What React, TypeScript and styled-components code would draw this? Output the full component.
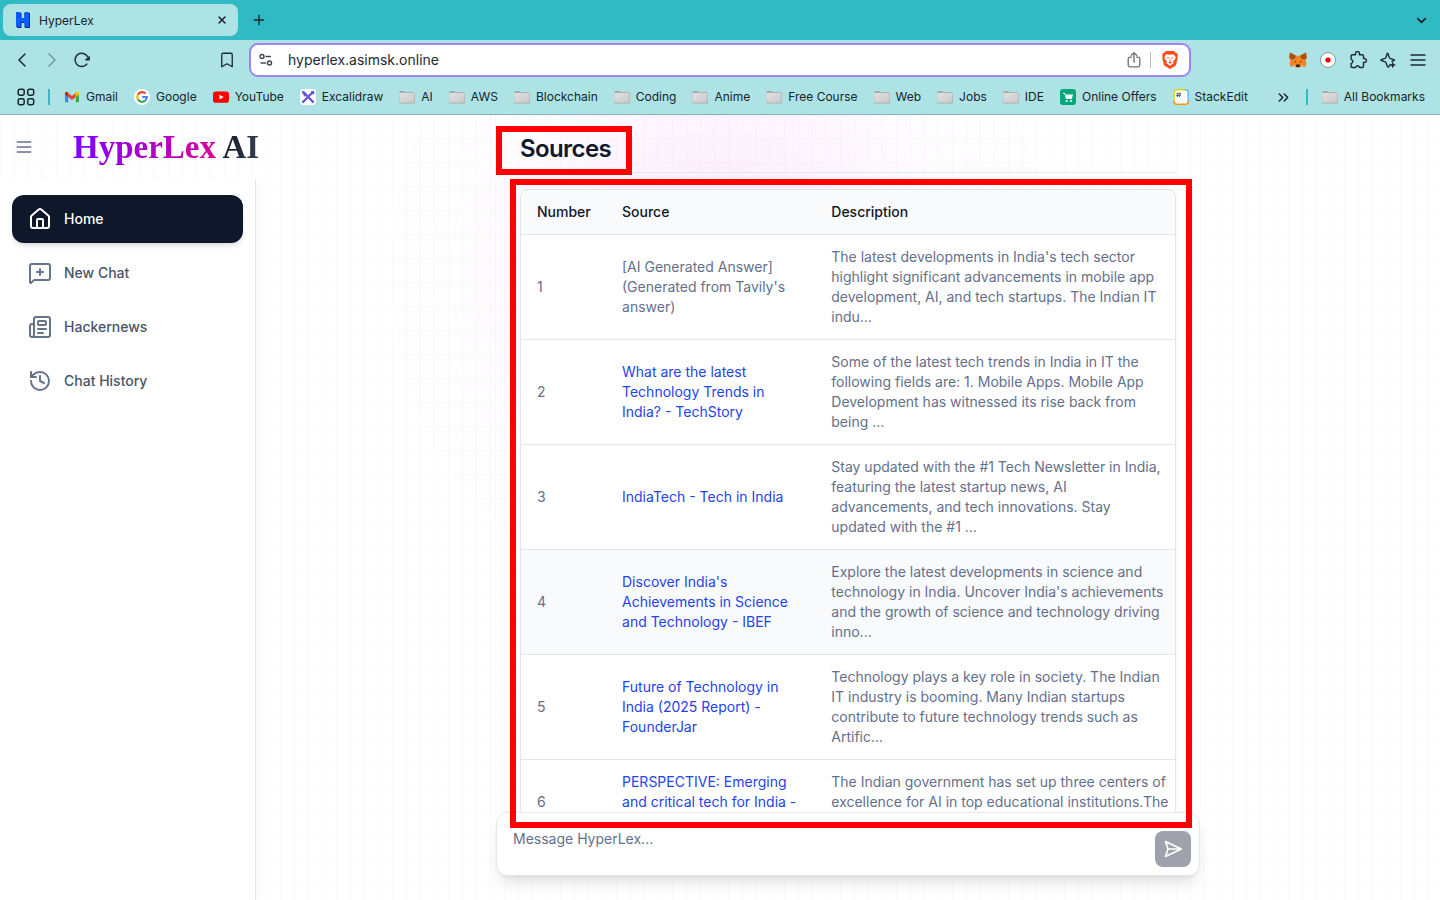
import React from 'react';
import styled, { createGlobalStyle, css } from 'styled-components';
import {
  Home, MessageSquarePlus, Newspaper, History, ChevronDown, ChevronLeft,
  ChevronRight, Bookmark, Plus, X, ChevronsRight,
} from 'lucide-react';

const GlobalStyle = createGlobalStyle`
  *, *::before, *::after { box-sizing: border-box; }
  body { margin: 0; font-family: Inter, "Liberation Sans", sans-serif; color: #0f172a; background: #fff; }
  button, textarea, input { font: inherit; color: inherit; }
  button { border: 0; padding: 0; background: none; cursor: pointer; display: inline-flex; align-items: center; justify-content: center; }
  a { color: inherit; text-decoration: none; }
  svg { display: block; flex: none; }
`;

const Browser = styled.div`
  display: flex;
  flex-direction: column;
  height: 100vh;
  overflow: hidden;
`;

/* ---------- browser frame ---------- */

const TabStrip = styled.header`
  display: flex;
  align-items: center;
  height: 40px;
  flex: none;
  padding: 0 11px 0 3px;
  background: #30bac3;
  color: #17242b;
`;

const Tab = styled.div`
  display: flex;
  align-items: center;
  gap: 8px;
  width: 235px;
  height: 32px;
  padding: 0 10px 0 12px;
  border-radius: 8px;
  background: #ade3e4;
  font-size: 12px;
`;

const TabTitle = styled.span`
  flex: 1;
`;

const NewTab = styled.button`
  width: 24px;
  height: 24px;
  margin-left: 9px;
`;

const TabSearch = styled.button`
  margin-left: auto;
`;

const Toolbar = styled.nav`
  display: flex;
  align-items: center;
  flex: none;
  height: 40px;
  padding: 0 12px;
  background: #ade3e4;
  color: #1d2b31;
`;

const ToolGroup = styled.div`
  display: flex;
  align-items: center;
  gap: 10px;
`;

const ToolButton = styled.button<{ $dim?: boolean }>`
  width: 20px;
  height: 24px;
  opacity: ${(p) => (p.$dim ? 0.4 : 1)};
`;

const LeftTools = styled.div`
  display: flex;
  justify-content: space-between;
  width: 225px;
  flex: none;
`;

const AddressBar = styled.div`
  display: flex;
  align-items: center;
  flex: 1;
  min-width: 0;
  height: 34px;
  margin: 0 97px 0 12px;
  padding: 0 9px 0 8px;
  border: 2px solid #9a86f3;
  border-radius: 9px;
  background: #fff;
`;

const AddressInput = styled.input`
  flex: 1;
  min-width: 0;
  margin-left: 15px;
  padding: 0;
  border: 0;
  outline: 0;
  background: none;
  font-size: 14px;
  line-height: 20px;
`;

const AddressRule = styled.span`
  width: 1px;
  height: 16px;
  margin: 0 9px 0 6px;
  background: #b5b9bc;
`;

const Bookmarks = styled.nav`
  display: flex;
  align-items: center;
  flex: none;
  height: 35px;
  padding: 0 15px 0 16px;
  border-bottom: 1px solid #86b4ba;
  background: #ade3e4;
  color: #17242b;
  font-size: 12px;
  line-height: 16px;
  white-space: nowrap;
`;

const BookmarkRule = styled.span`
  width: 2px;
  height: 16px;
  background: #30bac3;
`;

const BookmarkStart = styled.div`
  display: flex;
  align-items: center;
  gap: 12px;
`;

const BookmarkList = styled.div`
  display: flex;
  align-items: center;
  gap: 16px;
  margin-left: 14px;
`;

const BookmarkLink = styled.a`
  display: flex;
  align-items: center;
  gap: 6px;
`;

const BookmarkEnd = styled.div`
  display: flex;
  align-items: center;
  gap: 14px;
  margin-left: auto;
`;

/* ---------- site ---------- */

const Site = styled.div`
  position: relative;
  display: flex;
  flex: 1;
  min-height: 0;
  isolation: isolate;
  overflow: hidden;
  background-color: #fff;
  background-image: linear-gradient(to right, #8080800a 1px, transparent 1px),
    linear-gradient(to bottom, #8080800a 1px, transparent 1px);
  background-size: 14px 24px;
`;

const Glow = styled.div`
  position: absolute;
  z-index: -1;
  top: 0;
  left: 0;
  right: 0;
  width: 310px;
  height: 310px;
  margin: auto;
  border-radius: 50%;
  background: #e879f9;
  opacity: 0.2;
  filter: blur(100px);
`;

const Side = styled.div`
  display: flex;
  flex-direction: column;
  flex: none;
  width: 256px;
`;

const SiteHeader = styled.header`
  display: flex;
  align-items: center;
  flex: none;
  gap: 39px;
  height: 64px;
  padding-left: 14px;
  color: #64748b;
  white-space: nowrap;
`;

const Logo = styled.a`
  font-family: "Liberation Serif", serif;
  font-size: 33px;
  font-weight: 700;
  line-height: 40px;
`;

const LogoPart = styled.span<{ $from: string; $to: string }>`
  color: transparent;
  background: linear-gradient(to right, ${(p) => p.$from}, ${(p) => p.$to});
  background-clip: text;
  -webkit-background-clip: text;
`;

const SideNav = styled.nav`
  display: flex;
  flex-direction: column;
  gap: 6px;
  flex: 1;
  padding: 16px 12px;
  border-right: 1px solid #e2e4e8;
  background: #fff;
  box-shadow: 0 4px 12px #0000000a;
`;

const SideLink = styled.a<{ $active?: boolean }>`
  display: flex;
  align-items: center;
  gap: 12px;
  height: 48px;
  padding: 0 16px;
  border-radius: 12px;
  color: #475569;
  font-size: 14px;
  font-weight: 500;
  line-height: 20px;
  svg { color: #64748b; }
  ${(p) => p.$active && css`
    background: #0f172a;
    color: #fff;
    box-shadow: 0 4px 6px -1px #0000001a, 0 2px 4px -2px #0000001a;
    svg { color: #fff; }
  `}
`;

const Main = styled.main`
  display: flex;
  flex: 1;
  min-width: 0;
  justify-content: center;
`;

const Chat = styled.div`
  position: relative;
  display: flex;
  flex-direction: column;
  width: 100%;
  max-width: 706px;
  padding-bottom: 24px;
`;

const Answer = styled.section`
  flex: 1;
  min-height: 0;
  overflow: hidden;
  margin-bottom: -1px;
  padding: 18px 24px 0;
  border: solid #8080800c;
  border-width: 0 1px;
`;

const SectionTitle = styled.h2`
  margin: 0 0 16px;
  padding-bottom: 7px;
  border-bottom: 1px solid #e2e8f0;
  font-size: 24px;
  font-weight: 600;
  line-height: 32px;
  letter-spacing: -0.025em;
`;

const TableCard = styled.div`
  overflow: hidden;
  border: 1px solid #e2e4ea;
  border-radius: 8px;
  background: #fff;
`;

const Table = styled.table`
  width: 100%;
  border-collapse: collapse;
  table-layout: fixed;
  font-size: 14px;
  line-height: 20px;
  text-align: left;
`;

const NumberCol = styled.col`
  width: 13%;
`;

const SourceCol = styled.col`
  width: 32%;
`;

const HeadRow = styled.tr`
  background: #f9fafb;
`;

const HeadCell = styled.th`
  padding: 12px 16px;
  font-weight: 500;
`;

const Row = styled.tr<{ $hover?: boolean }>`
  border-top: 1px solid #e2e4ea;
  background: ${(p) => (p.$hover ? '#f9fafb' : 'transparent')};
`;

const Cell = styled.td`
  padding: 12px 0 12px 16px;
  color: #64708b;
  vertical-align: middle;
  white-space: pre-line;
`;

const SourceLink = styled.a`
  color: #2543eb;
`;

const Composer = styled.form`
  position: relative;
  display: flex;
  align-items: flex-start;
  flex: none;
  height: 64px;
  margin: 0 1px;
  padding: 16px 8px 8px 16px;
  border: 1px solid #e5e7eb;
  border-radius: 12px;
  background: #fff;
  box-shadow: 0 10px 15px -3px #0000001a, 0 4px 6px -4px #0000001a;
`;

const MessageBox = styled.textarea`
  flex: 1;
  height: 40px;
  padding: 0;
  border: 0;
  outline: 0;
  resize: none;
  background: none;
  font-size: 14px;
  line-height: 20px;
  &::placeholder { color: #64708b; opacity: 1; }
`;

const SendButton = styled.button`
  width: 36px;
  height: 36px;
  margin-top: 2px;
  border-radius: 8px;
  background: #9fa2ab;
  color: #fff;
`;

const Marker = styled.div`
  position: absolute;
  border: 6px solid #f00;
  pointer-events: none;
`;

const TitleMarker = styled(Marker)`
  top: 11px;
  left: 1px;
  width: 136px;
  height: 49px;
`;

const TableMarker = styled(Marker)`
  top: 64px;
  right: 9px;
  bottom: 72px;
  left: 15px;
`;

/* ---------- drawings ---------- */

const HLogo = () => (
  <svg width="16" height="16" viewBox="0 0 16 16">
    <path d="M2 1h4.500v5h3V1H15v15H9.800v-5H6.500v5H2z" fill="#0b2a7a" />
    <path d="M1 0h4.600v6h3.800V0H14v15H9.400v-5H5.600v5H1z" fill="#0a5cff" />
  </svg>
);
const Reload = () => (
  <svg width="18" height="18" viewBox="0 0 18 18" fill="none" stroke="currentColor" strokeWidth="1.500">
    <path d="M14.300 12.700A6.700 6.700 0 1 1 14.800 6" />
    <path d="M16.800 4.500v5h-4.500q-.5-.8.500-1.500z" fill="currentColor" stroke="none" />
  </svg>
);
const Tune = () => (
  <svg width="14" height="14" viewBox="0 0 14 14" fill="none" stroke="#3c464b" strokeWidth="1.400">
    <circle cx="3" cy="3.500" r="2" /><path d="M6.500 3.500H12" />
    <circle cx="10.500" cy="10" r="2" /><path d="M1.500 10H7" />
  </svg>
);
const ShareIcon = () => (
  <svg width="14" height="18" viewBox="0 0 14 18" fill="none" stroke="#6b7074" strokeWidth="1.300" strokeLinecap="round" strokeLinejoin="round">
    <path d="M4.500 6.200H3q-1.800 0-1.800 1.800v6q0 1.800 1.800 1.800h8q1.800 0 1.800-1.800V8q0-1.800-1.800-1.800H9.500M7 11.300V1.800M4.300 4.300 7 1.600l2.700 2.700" />
  </svg>
);
const Brave = () => (
  <svg width="16" height="18" viewBox="0 0 16 18">
    <path d="M4 0h8l1.600 1.700 1.300.1 1 2.600-.5 1.300.4 1.600-2 7.200L8 18l-5.800-3.500-2-7.200.4-1.600-.5-1.300 1-2.600 1.300-.1z" fill="#fb4a1c" />
    <path d="M4.300 3.200 8 3.800l3.700-.6 1.900 2.700-.5 2.300-2.200 2.400.8 1.400L8 14.800 4.300 12l.8-1.400-2.200-2.400-.5-2.300z" fill="#fff" />
    <path d="m4.400 6.100 2.500.6-.4 1.200zM11.600 6.100l-2.500.6.400 1.200zM8 7.200l.6 2.600L8 10.500l-.6-.7zM6 11.200l2-.6 2 .6-2 1.500z" fill="#fb4a1c" />
  </svg>
);
const Fox = () => (
  <svg width="18" height="16" viewBox="0 0 18 16">
    <path d="m1 .5 6 3.200h4l6-3.200.7 5-1.200 3 1 3-1.300 3.600-3.500-.8L11 15.500H7l-1.700-1.200-3.500.8L.5 11.500l1-3L.3 5.500z" fill="#f5841f" />
    <path d="m1 .5 6 3.300L5.500 7 1.500 7.500.3 5.500zM17 .5l-6 3.300L12.500 7l4 .5 1.200-2z" fill="#a8510e" />
    <path d="m7 12.800 2-.6 2 .6v2.200H7z" fill="#3a2a20" />
    <path d="m4.800 9 2.400.4-.2 1zM13.200 9l-2.400.4.2 1z" fill="#24333b" />
    <path d="m2.500 14.600 2.500-.8 1.500 1.200-1.300-2.400zM15.500 14.600l-2.500-.8-1.500 1.200 1.300-2.400z" fill="#d9c3b2" opacity=".8" />
  </svg>
);
const RecordDot = () => (
  <svg width="16" height="16" viewBox="0 0 16 16">
    <circle cx="8" cy="8" r="7.500" fill="#fff" stroke="#7d9a9f" /><circle cx="8" cy="8" r="2.600" fill="#f00" />
  </svg>
);
const PuzzlePiece = () => (
  <svg width="18" height="18" viewBox="0 0 18 18" fill="none" stroke="currentColor" strokeWidth="1.400" strokeLinejoin="round">
    <path d="M3.300 3.700h2.900c.3 0 .5-.3.400-.6a2 2 0 1 1 3.800 0c-.1.300.1.600.4.600h2.500q1.200 0 1.200 1.200v2.300c0 .3.300.5.600.4a1.900 1.900 0 1 1 0 3.700c-.3-.1-.6.100-.6.400v3.600q0 1.200-1.200 1.200h-2.400c-.3 0-.5-.200-.6-.5a1.800 1.800 0 0 0-3.400 0c-.1.300-.3.500-.6.500h-3q-1.200 0-1.200-1.200v-2.600c0-.3.200-.5.500-.6a1.800 1.800 0 0 0 0-3.400c-.3-.1-.5-.3-.5-.6V4.900q0-1.200 1.200-1.200z" />
  </svg>
);
const Spark = () => (
  <svg width="17" height="17" viewBox="0 0 17 17" fill="none" stroke="currentColor" strokeWidth="1.400" strokeLinejoin="round">
    <path d="M10.500 12.200 8.700 14.800Q8 15.500 7.500 14.500L6 10.800q-.3-.7-1-1L1.300 8.500q-.8-.4 0-.8L5 6.300q.7-.3 1-1l1.200-3.800q.3-.8.700 0L9.200 5.300q.3.700 1 1L14 7.700q.8.400 0 .8l-2.500 1" />
    <path d="m12.700 9.800 1 2.200 2.300 1-2.300 1-1 2.200-1-2.200-2.200-1 2.200-1z" fill="currentColor" stroke="none" />
  </svg>
);
const Burger = () => (
  <svg width="16" height="14" viewBox="0 0 16 14" stroke="currentColor" strokeWidth="1.400"><path d="M.5 2h15M.5 7h15M.5 12h15" /></svg>
);
const AppGrid = () => (
  <svg width="18" height="18" viewBox="0 0 18 18" fill="none" stroke="currentColor" strokeWidth="1.500">
    <rect x="1.200" y="1.200" width="6" height="6" rx="1.700" /><rect x="10.700" y="1.200" width="6" height="6" rx="1.700" />
    <rect x="1.200" y="10.700" width="6" height="6" rx="1.700" /><rect x="10.700" y="10.700" width="6" height="6" rx="1.700" />
  </svg>
);
const Gmail = () => (
  <svg width="16" height="16" viewBox="0 0 16 16">
    <path d="M1 4v8.500q0 .8.800.8H4.200V6.500z" fill="#4285f4" /><path d="M15 4v8.500q0 .8-.8.800h-2.400V6.500z" fill="#34a853" />
    <path d="M4.200 4 8 7l3.800-3v4L8 11 4.200 8z" fill="#ea4335" />
    <path d="M1 4.300q0-1.500 1.500-1.500.8 0 1.700.9V8L1 5.600z" fill="#c5221f" /><path d="M15 4.300q0-1.500-1.500-1.500-.8 0-1.700.9V8L15 5.600z" fill="#fbbc04" />
  </svg>
);
const Google = () => (
  <svg width="16" height="16" viewBox="0 0 16 16" fill="none" strokeWidth="2.200">
    <circle cx="8" cy="8" r="8" fill="#fff" />
    <path d="M11.500 4.600A4.800 4.800 0 0 0 3.800 5.700" stroke="#ea4335" />
    <path d="M3.800 5.700a4.800 4.800 0 0 0 0 4.600" stroke="#fbbc05" />
    <path d="M3.800 10.300a4.800 4.800 0 0 0 7.400 1.300" stroke="#34a853" />
    <path d="M11.200 11.600A4.800 4.800 0 0 0 12.800 8H8.200" stroke="#4285f4" />
  </svg>
);
const YouTube = () => (
  <svg width="16" height="16" viewBox="0 0 16 16"><rect y="2.500" width="16" height="11.200" rx="2.800" fill="#f00" /><path d="m6.500 5.700 4.200 2.400-4.200 2.400z" fill="#fff" /></svg>
);
const Excalidraw = () => (
  <svg width="16" height="16" viewBox="0 0 16 16" fill="none" stroke="#6657d9" strokeLinecap="round">
    <rect width="16" height="16" rx="3" fill="#fff" stroke="none" />
    <path d="m4 3.500 9 9.500M3 13l4.500-4.500M9.500 6.500l2.800-2.800" strokeWidth="2.400" />
    <path d="M2.700 2.700 5 6.700M11.800 3h1.500v1.500" strokeWidth="1.800" />
  </svg>
);
const Folder = () => (
  <svg width="16" height="16" viewBox="0 0 16 16">
    <defs>
      <linearGradient id="folder-face" x1="0" y1="0" x2="1" y2="1">
        <stop offset="0" stopColor="#e2e2e2" /><stop offset="1" stopColor="#c8c8c8" />
      </linearGradient>
    </defs>
    <path d="M.3 4q0-2 1.500-2H5l1.300 1H14q1.500 0 1.500 1.500V6H.3z" fill="#9fa3a4" />
    <rect y="4" width="16" height="10.500" rx="1.500" fill="#a4a8a9" />
    <rect x=".3" y="3.700" width="15.200" height="10" rx="1.400" fill="url(#folder-face)" />
  </svg>
);
const Cart = () => (
  <svg width="16" height="16" viewBox="0 0 16 16">
    <rect width="16" height="16" rx="3" fill="#06a77d" />
    <path d="M3 4h2l.5 1.500H13L11.800 10H6L4.500 5H3z" fill="#fff" /><circle cx="6.700" cy="12" r="1.100" fill="#fff" /><circle cx="11" cy="12" r="1.100" fill="#fff" />
  </svg>
);
const StackEdit = () => (
  <svg width="16" height="16" viewBox="0 0 16 16" fill="none" strokeWidth="1.500">
    <rect x=".7" y=".7" width="14.600" height="14.600" rx="2.800" fill="#fff" />
    <path d="M1 13V3.500Q1 .8 3.500.8H13" stroke="#cddc1d" /><path d="M12.500.8q2.700 0 2.700 2.700V13" stroke="#6bb5ff" />
    <path d="M.9 12q0 3.200 2.600 3.200h9q2.700 0 2.700-2.700" stroke="#ff9500" />
    <path d="M5 3.500 4.400 8M7.200 3.500 6.600 8M3.400 4.800h4.600M3.100 6.600h4.600" stroke="#444" strokeWidth=".8" />
  </svg>
);
const SidebarToggle = () => (
  <svg width="20" height="20" viewBox="0 0 24 24" stroke="currentColor" strokeWidth="2" strokeLinecap="round"><path d="M4 6h16M4 12h16M4 18h16" /></svg>
);
const SendArrow = () => (
  <svg width="20" height="20" viewBox="0 0 24 24" fill="none" stroke="currentColor" strokeWidth="2" strokeLinecap="round" strokeLinejoin="round">
    <path d="m3 3 3 9-3 9 19-9ZM6 12h16" />
  </svg>
);

/* ---------- data ---------- */

const bookmarks: { label: string; Icon: React.FC }[] = [
  { label: 'Gmail', Icon: Gmail },
  { label: 'Google', Icon: Google },
  { label: 'YouTube', Icon: YouTube },
  { label: 'Excalidraw', Icon: Excalidraw },
  { label: 'AI', Icon: Folder },
  { label: 'AWS', Icon: Folder },
  { label: 'Blockchain', Icon: Folder },
  { label: 'Coding', Icon: Folder },
  { label: 'Anime', Icon: Folder },
  { label: 'Free Course', Icon: Folder },
  { label: 'Web', Icon: Folder },
  { label: 'Jobs', Icon: Folder },
  { label: 'IDE', Icon: Folder },
  { label: 'Online Offers', Icon: Cart },
  { label: 'StackEdit', Icon: StackEdit },
];

const sideLinks = [
  { label: 'Home', Icon: Home },
  { label: 'New Chat', Icon: MessageSquarePlus },
  { label: 'Hackernews', Icon: Newspaper },
  { label: 'Chat History', Icon: History },
];

type Source = { title: string; text: string; plain?: boolean; hover?: boolean };

const sources: Source[] = [
  { title: "[AI Generated Answer]\n(Generated from Tavily's\nanswer)", plain: true, text: "The latest developments in India's tech sector\nhighlight significant advancements in mobile app\ndevelopment, AI, and tech startups. The Indian IT\nindu..." },
  { title: 'What are the latest\nTechnology Trends in\nIndia? - TechStory', text: 'Some of the latest tech trends in India in IT the\nfollowing fields are: 1. Mobile Apps. Mobile App\nDevelopment has witnessed its rise back from\nbeing ...' },
  { title: 'IndiaTech - Tech in India', text: 'Stay updated with the #1 Tech Newsletter in India,\nfeaturing the latest startup news, AI\nadvancements, and tech innovations. Stay\nupdated with the #1 ...' },
  { title: "Discover India's\nAchievements in Science\nand Technology - IBEF", hover: true, text: "Explore the latest developments in science and\ntechnology in India. Uncover India's achievements\nand the growth of science and technology driving\ninno..." },
  { title: 'Future of Technology in\nIndia (2025 Report) -\nFounderJar', text: 'Technology plays a key role in society. The Indian\nIT industry is booming. Many Indian startups\ncontribute to future technology trends such as\nArtific...' },
  { title: 'PERSPECTIVE: Emerging\nand critical tech for India -\n\u00a0', text: 'The Indian government has set up three centers of\nexcellence for AI in top educational institutions.The\n\u00a0' },
];

export default function App() {
  return (
    <Browser>
      <GlobalStyle />
      <TabStrip>
        <Tab>
          <HLogo />
          <TabTitle>HyperLex</TabTitle>
          <button aria-label="Close tab"><X size={12} strokeWidth={3} /></button>
        </Tab>
        <NewTab aria-label="New tab"><Plus size={16} strokeWidth={2} /></NewTab>
        <TabSearch aria-label="Search tabs"><ChevronDown size={15} strokeWidth={3} /></TabSearch>
      </TabStrip>

      <Toolbar aria-label="Browser">
        <LeftTools>
          <ToolGroup>
            <ToolButton aria-label="Back"><ChevronLeft size={24} strokeWidth={1.5} /></ToolButton>
            <ToolButton aria-label="Forward" $dim><ChevronRight size={24} strokeWidth={1.5} /></ToolButton>
            <ToolButton aria-label="Reload"><Reload /></ToolButton>
          </ToolGroup>
          <ToolButton aria-label="Bookmark this page"><Bookmark size={18} strokeWidth={1.75} /></ToolButton>
        </LeftTools>
        <AddressBar>
          <Tune />
          <AddressInput aria-label="Address" defaultValue="hyperlex.asimsk.online" />
          <ToolButton aria-label="Share"><ShareIcon /></ToolButton>
          <AddressRule />
          <ToolButton aria-label="Shields"><Brave /></ToolButton>
        </AddressBar>
        <ToolGroup>
          <ToolButton aria-label="Wallet"><Fox /></ToolButton>
          <ToolButton aria-label="Recorder"><RecordDot /></ToolButton>
          <ToolButton aria-label="Extensions"><PuzzlePiece /></ToolButton>
          <ToolButton aria-label="Assistant"><Spark /></ToolButton>
          <ToolButton aria-label="Menu"><Burger /></ToolButton>
        </ToolGroup>
      </Toolbar>

      <Bookmarks aria-label="Bookmarks">
        <BookmarkStart>
          <ToolButton aria-label="All apps"><AppGrid /></ToolButton>
          <BookmarkRule />
        </BookmarkStart>
        <BookmarkList>
          {bookmarks.map(({ label, Icon }) => (
            <BookmarkLink key={label} href="#"><Icon />{label}</BookmarkLink>
          ))}
        </BookmarkList>
        <BookmarkEnd>
          <button aria-label="More bookmarks"><ChevronsRight size={17} strokeWidth={2} /></button>
          <BookmarkRule />
          <BookmarkLink href="#"><Folder />All Bookmarks</BookmarkLink>
        </BookmarkEnd>
      </Bookmarks>

      <Site>
        <Glow />
        <Side>
          <SiteHeader>
            <button aria-label="Toggle sidebar"><SidebarToggle /></button>
            <Logo href="#">
              <LogoPart $from="#8000ff" $to="#d8009a">HyperLex</LogoPart>{' '}
              <LogoPart $from="#111827" $to="#374151">AI</LogoPart>
            </Logo>
          </SiteHeader>
          <SideNav aria-label="Site">
            {sideLinks.map(({ label, Icon }, i) => (
              <SideLink key={label} href="#" $active={i === 0}><Icon size={24} strokeWidth={2} />{label}</SideLink>
            ))}
          </SideNav>
        </Side>
        <Main>
          <Chat>
            <Answer>
              <SectionTitle>Sources</SectionTitle>
              <TableCard>
                <Table>
                  <colgroup><NumberCol /><SourceCol /><col /></colgroup>
                  <thead>
                    <HeadRow><HeadCell>Number</HeadCell><HeadCell>Source</HeadCell><HeadCell>Description</HeadCell></HeadRow>
                  </thead>
                  <tbody>
                    {sources.map((s, i) => (
                      <Row key={s.title} $hover={s.hover}>
                        <Cell>{i + 1}</Cell>
                        <Cell>{s.plain ? s.title : <SourceLink href="#">{s.title}</SourceLink>}</Cell>
                        <Cell>{s.text}</Cell>
                      </Row>
                    ))}
                  </tbody>
                </Table>
              </TableCard>
            </Answer>
            <Composer>
              <MessageBox aria-label="Message" placeholder="Message HyperLex..." />
              <SendButton type="button" aria-label="Send"><SendArrow /></SendButton>
            </Composer>
            <TitleMarker />
            <TableMarker />
          </Chat>
        </Main>
      </Site>
    </Browser>
  );
}
